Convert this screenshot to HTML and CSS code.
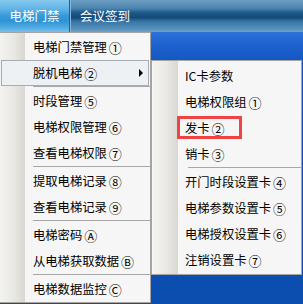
FILE: index.html
```html
<!DOCTYPE html>
<html>
<head>
<meta charset="utf-8">
<link rel="stylesheet" href="styles.css">
</head>
<body>
<div class="bar">
  <div class="tab active">电梯门禁</div>
  <div class="tab">会议签到</div>
</div>
<div class="desktop">
  <div class="menu main">
    <div class="item">电梯门禁管理<span class="n">①</span></div>
    <div class="item hl">脱机电梯<span class="n">②</span><span class="arrow"></span></div>
    <div class="sep"></div>
    <div class="item">时段管理<span class="n">⑤</span></div>
    <div class="item">电梯权限管理<span class="n">⑥</span></div>
    <div class="item">查看电梯权限<span class="n">⑦</span></div>
    <div class="sep"></div>
    <div class="item">提取电梯记录<span class="n">⑧</span></div>
    <div class="item">查看电梯记录<span class="n">⑨</span></div>
    <div class="sep"></div>
    <div class="item">电梯密码<span class="n">Ⓐ</span></div>
    <div class="item">从电梯获取数据<span class="n">Ⓑ</span></div>
    <div class="sep"></div>
    <div class="item">电梯数据监控<span class="n">Ⓒ</span></div>
  </div>
  <div class="menu sub">
    <div class="item">IC卡参数</div>
    <div class="item">电梯权限组<span class="n">①</span></div>
    <div class="item">发卡<span class="n">②</span><span class="redbox"></span></div>
    <div class="item">销卡<span class="n">③</span></div>
    <div class="sep"></div>
    <div class="item">开门时段设置卡<span class="n">④</span></div>
    <div class="item">电梯参数设置卡<span class="n">⑤</span></div>
    <div class="item">电梯授权设置卡<span class="n">⑥</span></div>
    <div class="item">注销设置卡<span class="n">⑦</span></div>
  </div>
</div>
</body>
</html>
```
FILE: styles.css
```css
html, body {
  margin: 0;
  padding: 0;
}
body {
  width: 303px;
  height: 304px;
  overflow: hidden;
  font-family: "Noto Sans CJK SC", "Noto Sans", sans-serif;
  font-size: 12px;
  color: #000;
  background: #0c4db0;
}
.bar {
  display: flex;
  height: 32px;
  background: linear-gradient(to bottom, #6c9ec2 0%, #4d86b0 25%, #1d5889 40%, #134b7a 55%, #3a77a6 68%, #5590bb 90%, #6ea2c6 100%);
}
.tab {
  width: 68px;
  line-height: 32px;
  text-align: center;
  color: #fff;
  font-size: 12.5px;
}
.tab.active {
  width: 69px;
  border-right: 1px solid #2a5e86;
  background: linear-gradient(to bottom, #86c8ee 0%, #5db2e4 30%, #3699d8 50%, #2f92d4 65%, #54ade2 88%, #78c0ea 100%);
}
.tab + .tab {
  border-left: 1px solid #86b6d8;
}
.desktop {
  display: flex;
  align-items: flex-start;
  height: 272px;
  background: linear-gradient(to bottom, #2c72d8 0px, #1e63cf 12px, #1558c2 28px, #0f52b8 60px, #0c4db0 100%);
}
.menu {
  box-sizing: border-box;
  background: linear-gradient(to right, #f3f3f1 0px, #e8e7e3 14px, #d8d7d1 25px, #f6f6f6 25px);
  border: 1px solid #a4a4a4;
}
.main {
  width: 151px;
  border-left: none;
  padding-top: 1px;
}
.sub {
  width: 151px;
  margin-top: 28px;
  padding: 2px 0 1px 1px;
  background-origin: content-box;
  background-clip: border-box;
}
.item {
  position: relative;
  display: flex;
  align-items: center;
  height: 26px;
  padding-left: 33px;
  white-space: nowrap;
  font-size: 12.3px;
}
.n {
  margin-left: 2px;
  font-size: 13px;
}
.sub .item {
  padding-left: 32px;
}
.item.hl {
  box-sizing: border-box;
  margin: 0 1px 0 1px;
  padding-left: 31px;
  background: #eef1f3;
  border: 1px solid #a9acb0;
}
.arrow {
  margin-left: auto;
  margin-right: 5px;
  width: 0;
  height: 0;
  border-left: 4px solid #000;
  border-top: 4px solid transparent;
  border-bottom: 4px solid transparent;
}
.sep {
  height: 2px;
  margin-left: 33px;
  position: relative;
}
.sep::before {
  content: "";
  position: absolute;
  left: 0;
  right: 0;
  top: 0;
  height: 1px;
  background: #a8a8a8;
}
.sub .sep {
  margin-left: 35px;
}
.redbox {
  position: absolute;
  left: 24px;
  top: 1px;
  width: 59px;
  height: 17px;
  border: 3px solid #f04343;
}
```
